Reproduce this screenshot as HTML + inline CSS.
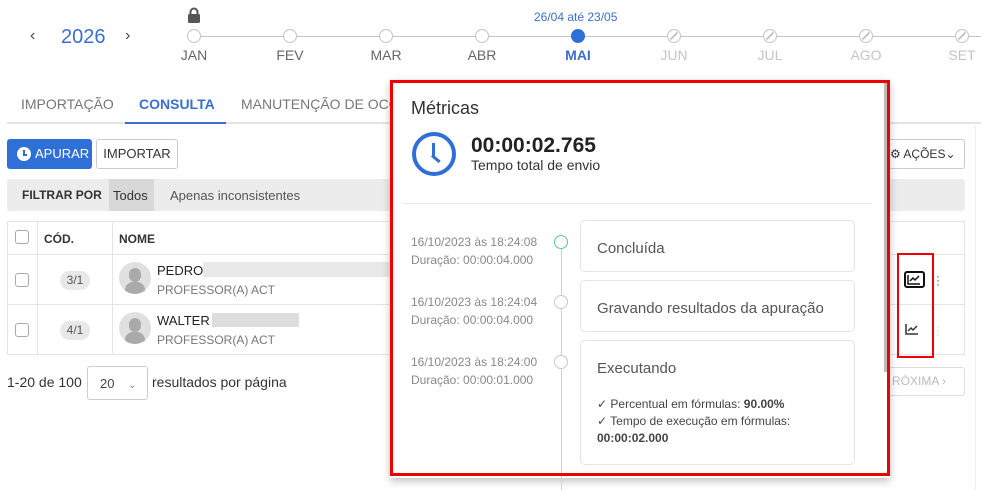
<!DOCTYPE html>
<html><head><meta charset="utf-8"><style>
*{box-sizing:border-box;margin:0;padding:0}
body{width:981px;height:490px;overflow:hidden;background:#fff;font-family:"Liberation Sans",sans-serif;color:#333;position:relative}
.a{position:absolute}
.mc{position:absolute;width:14px;height:14px;border:1.5px solid #c4c4c4;border-radius:50%;background:#fff;top:29px}
.ml{position:absolute;top:47px;font-size:14px;color:#666;width:60px;text-align:center}
.cb{position:absolute;width:14px;height:14px;border:1.5px solid #aaa;border-radius:3px;background:#fff}
.card{position:absolute;left:580px;width:275px;border:1px solid #e4e4e4;border-radius:5px;background:#fff;font-size:15px;color:#555;padding-left:16px}
.dt{position:absolute;left:411px;font-size:12px;color:#888;line-height:18px}
.tc{position:absolute;left:554px;width:14px;height:14px;border:1.5px solid #c8c8c8;border-radius:50%;background:#fff}
</style></head><body>
<div class="a" style="left:30px;top:27px;font-size:16px;color:#444">‹</div>
<div class="a" style="left:61px;top:26px;font-size:20px;color:#3a6fd0">2026</div>
<div class="a" style="left:125px;top:27px;font-size:16px;color:#444">›</div>
<div class="a" style="left:194px;top:36px;width:787px;height:1px;background:#c4c4c4"></div>
<svg class="a" style="left:187px;top:7px" width="14" height="16" viewBox="0 0 14 16"><path d="M3.5 7V5a3.5 3.5 0 0 1 7 0v2" fill="none" stroke="#555" stroke-width="2"/><rect x="1" y="7" width="12" height="9" rx="1.5" fill="#555"/></svg>
<div class="mc" style="left:187px"></div><div class="ml" style="left:164px">JAN</div>
<div class="mc" style="left:283px"></div><div class="ml" style="left:260px">FEV</div>
<div class="mc" style="left:379px"></div><div class="ml" style="left:356px">MAR</div>
<div class="mc" style="left:475px"></div><div class="ml" style="left:452px">ABR</div>
<div class="a" style="left:534px;top:10px;font-size:12px;color:#3a6fd0">26/04 até 23/05</div>
<div class="mc" style="left:571px;background:#2f6fd8;border-color:#2f6fd8"></div><div class="ml" style="left:548px;color:#3a6fd0;font-weight:bold">MAI</div>
<div class="mc" style="left:667px"><div class="a" style="left:1px;top:5px;width:10px;height:2px;background:#c4c4c4;transform:rotate(-45deg)"></div></div><div class="ml" style="left:644px;color:#c4c4c4">JUN</div>
<div class="mc" style="left:763px"><div class="a" style="left:1px;top:5px;width:10px;height:2px;background:#c4c4c4;transform:rotate(-45deg)"></div></div><div class="ml" style="left:740px;color:#c4c4c4">JUL</div>
<div class="mc" style="left:859px"><div class="a" style="left:1px;top:5px;width:10px;height:2px;background:#c4c4c4;transform:rotate(-45deg)"></div></div><div class="ml" style="left:836px;color:#c4c4c4">AGO</div>
<div class="mc" style="left:955px"><div class="a" style="left:1px;top:5px;width:10px;height:2px;background:#c4c4c4;transform:rotate(-45deg)"></div></div><div class="ml" style="left:932px;color:#c4c4c4">SET</div>
<div class="a" style="left:7px;top:122px;width:974px;height:2px;background:#e4e4e4"></div>
<div class="a" style="left:21px;top:96px;font-size:14px;color:#777">IMPORTAÇÃO</div>
<div class="a" style="left:139px;top:96px;font-size:14px;color:#3a6fd0;font-weight:bold">CONSULTA</div>
<div class="a" style="left:125px;top:122px;width:101px;height:2px;background:#3a6fd0"></div>
<div class="a" style="left:241px;top:96px;font-size:14px;color:#777">MANUTENÇÃO DE OCO</div>
<div class="a" style="left:7px;top:139px;width:85px;height:30px;background:#2f6fd8;border-radius:3px;color:#fff;font-size:13px;line-height:30px;padding-left:28px">APURAR</div>
<div class="a" style="left:17px;top:147px;width:14px;height:14px;border-radius:50%;background:#fff"><div class="a" style="left:6px;top:3px;width:2px;height:5px;background:#2f6fd8"></div><div class="a" style="left:6px;top:7px;width:4px;height:2px;background:#2f6fd8"></div></div>
<div class="a" style="left:96px;top:139px;width:82px;height:30px;border:1px solid #ccc;border-radius:3px;font-size:13px;line-height:28px;text-align:center;color:#333">IMPORTAR</div>
<div class="a" style="left:7px;top:179px;width:958px;height:32px;background:#ececec;border-radius:3px"></div>
<div class="a" style="left:109px;top:179px;width:45px;height:32px;background:#d8d8d8"></div>
<div class="a" style="left:22px;top:188px;font-size:12px;font-weight:bold;color:#333">FILTRAR POR</div>
<div class="a" style="left:113px;top:188px;font-size:13px;color:#333">Todos</div>
<div class="a" style="left:170px;top:188px;font-size:13px;color:#555">Apenas inconsistentes</div>
<div class="a" style="left:7px;top:221px;width:958px;height:134px;border:1px solid #e4e4e4"></div>
<div class="a" style="left:7px;top:254px;width:958px;height:1px;background:#e4e4e4"></div>
<div class="a" style="left:7px;top:304px;width:958px;height:1px;background:#e4e4e4"></div>
<div class="a" style="left:37px;top:221px;width:1px;height:134px;background:#e4e4e4"></div>
<div class="a" style="left:112px;top:221px;width:1px;height:134px;background:#e4e4e4"></div>
<div class="cb" style="left:15px;top:230px"></div><div class="cb" style="left:15px;top:273px"></div><div class="cb" style="left:15px;top:323px"></div>
<div class="a" style="left:44px;top:232px;font-size:12px;font-weight:bold">CÓD.</div>
<div class="a" style="left:119px;top:232px;font-size:12px;font-weight:bold">NOME</div>
<div class="a" style="left:60px;top:271px;width:30px;height:19px;border-radius:10px;background:#e8e8e8;font-size:12px;text-align:center;line-height:19px;color:#555">3/1</div>
<div class="a" style="left:60px;top:321px;width:30px;height:19px;border-radius:10px;background:#e8e8e8;font-size:12px;text-align:center;line-height:19px;color:#555">4/1</div>
<div class="a" style="left:119px;top:262px;width:32px;height:32px;border-radius:50%;background:#e0e0e0;overflow:hidden"><div class="a" style="left:10px;top:6px;width:12px;height:14px;border-radius:6px;background:#aaa"></div><div class="a" style="left:6px;top:20px;width:20px;height:14px;border-radius:8px 8px 0 0;background:#aaa"></div></div>
<div class="a" style="left:119px;top:312px;width:32px;height:32px;border-radius:50%;background:#e0e0e0;overflow:hidden"><div class="a" style="left:10px;top:6px;width:12px;height:14px;border-radius:6px;background:#aaa"></div><div class="a" style="left:6px;top:20px;width:20px;height:14px;border-radius:8px 8px 0 0;background:#aaa"></div></div>
<div class="a" style="left:157px;top:263px;font-size:13px;color:#222">PEDRO</div>
<div class="a" style="left:203px;top:262px;width:190px;height:15px;background:#e8e8e8"></div>
<div class="a" style="left:157px;top:283px;font-size:12px;color:#777">PROFESSOR(A) ACT</div>
<div class="a" style="left:157px;top:313px;font-size:13px;color:#222">WALTER I</div>
<div class="a" style="left:212px;top:313px;width:87px;height:14px;background:#ddd"></div>
<div class="a" style="left:157px;top:333px;font-size:12px;color:#777">PROFESSOR(A) ACT</div>
<div class="a" style="left:7px;top:374px;font-size:14px;color:#333">1-20 de 100</div>
<div class="a" style="left:87px;top:366px;width:61px;height:34px;border:1px solid #ccc;border-radius:3px;font-size:13px;padding:9px 0 0 12px;color:#444">20 <span style="margin-left:10px;font-size:10px;color:#888">⌄</span></div>
<div class="a" style="left:152px;top:374px;font-size:14px;color:#333">resultados por página</div>
<div class="a" style="left:885px;top:139px;width:80px;height:30px;border:1px solid #ccc;border-radius:3px;font-size:12px;line-height:28px;padding-left:4px;color:#333">⚙ AÇÕES⌄</div>
<div class="a" style="left:885px;top:367px;width:80px;height:29px;border:1px solid #ddd;border-radius:3px;font-size:12px;line-height:27px;color:#bbb;padding-left:6px">RÓXIMA ›</div>
<div class="a" style="left:975px;top:125px;width:1px;height:365px;background:#eee"></div>
<div class="a" style="left:897px;top:253px;width:37px;height:105px;border:2px solid #e00"></div>
<div class="a" style="left:904px;top:271px;width:21px;height:17px;border:2px solid #111;border-radius:3px"></div>
<svg class="a" style="left:907px;top:274px" width="14" height="11"><path d="M1 1v9h12M3 7l3-3 2 2 4-4" fill="none" stroke="#111" stroke-width="1.5"/></svg>
<svg class="a" style="left:905px;top:323px" width="14" height="12"><path d="M1 1v10h12M3 8l3-3 2 2 4-4" fill="none" stroke="#333" stroke-width="1.5"/></svg>
<div class="a" style="left:936px;top:274px;font-size:12px;line-height:4px;color:#555">·<br>·<br>·</div>
<div class="a" style="left:936px;top:324px;font-size:12px;line-height:4px;color:#ccc">·<br>·<br>·</div>
<div class="a" style="left:390px;top:80px;width:500px;height:398px;background:#fff;box-shadow:0 3px 8px rgba(0,0,0,.25)"></div>
<div class="a" style="left:884px;top:82px;width:4px;height:290px;background:#bbb"></div>
<div class="a" style="left:411px;top:98px;font-size:18px;color:#333">Métricas</div>
<div class="a" style="left:412px;top:132px;width:44px;height:44px;border:4px solid #2f6fd8;border-radius:50%"><div class="a" style="left:16px;top:7px;width:3px;height:13px;background:#2f6fd8"></div><div class="a" style="left:16px;top:18px;width:10px;height:3px;background:#2f6fd8;transform:rotate(40deg);transform-origin:0 50%"></div></div>
<div class="a" style="left:471px;top:134px;font-size:21px;font-weight:bold;color:#222">00:00:02.765</div>
<div class="a" style="left:471px;top:157px;font-size:14px;color:#333">Tempo total de envio</div>
<div class="a" style="left:402px;top:203px;width:470px;height:1px;background:#e6e6e6"></div>
<div class="a" style="left:561px;top:242px;width:1px;height:248px;background:#d0d0d0"></div>
<div class="dt" style="top:233px">16/10/2023 às 18:24:08<br>Duração: 00:00:04.000</div>
<div class="dt" style="top:293px">16/10/2023 às 18:24:04<br>Duração: 00:00:04.000</div>
<div class="dt" style="top:353px">16/10/2023 às 18:24:00<br>Duração: 00:00:01.000</div>
<div class="tc" style="top:235px;border-color:#5cc29a"></div>
<div class="tc" style="top:295px"></div>
<div class="tc" style="top:355px"></div>
<div class="card" style="top:220px;height:52px;line-height:56px">Concluída</div>
<div class="card" style="top:280px;height:52px;line-height:56px">Gravando resultados da apuração</div>
<div class="card" style="top:340px;height:125px;padding-top:19px">Executando
<div style="font-size:12px;color:#444;margin-top:19px;line-height:17px">✓ Percentual em fórmulas: <b>90.00%</b><br>✓ Tempo de execução em fórmulas:<br><b>00:00:02.000</b></div></div>
<div class="a" style="left:390px;top:80px;width:500px;height:396px;border:3px solid #e00"></div>
</body></html>
